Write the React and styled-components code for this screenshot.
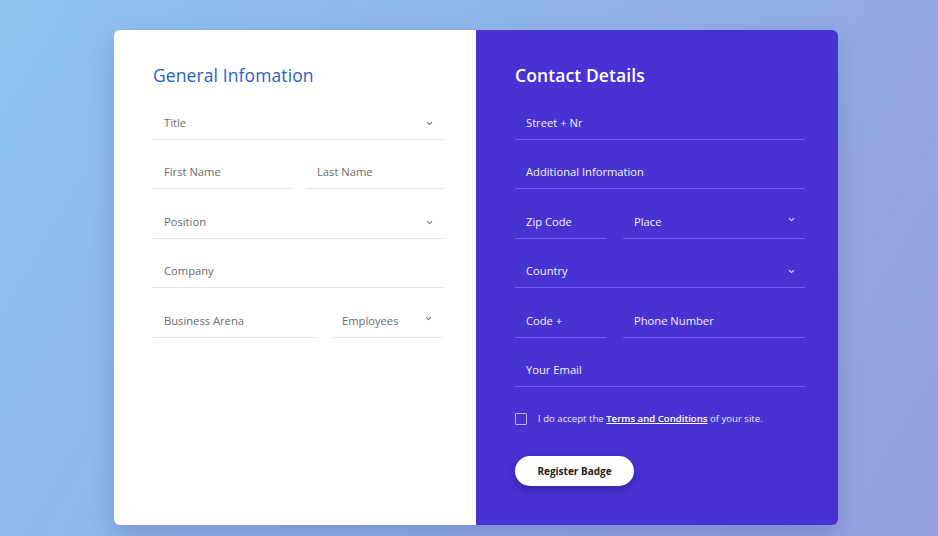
import React from "react";
import styled, { createGlobalStyle } from "styled-components";

const GlobalStyle = createGlobalStyle`
  html, body {
    margin: 0;
    padding: 0;
  }
  body {
    font-family: "Open Sans", "Liberation Sans", sans-serif;
    background: linear-gradient(120deg, #8cc4ec 0%, #90b4e8 45%, #959fe0 100%);
    min-height: 100vh;
  }
`;

const Page = styled.div`
  width: 938px;
  height: 536px;
  padding: 30px 0 0 14px;
  box-sizing: border-box;
  display: flex;
  justify-content: center;
  align-items: flex-start;
`;

const Card = styled.div`
  width: 724px;
  height: 495px;
  display: grid;
  grid-template-columns: 362px 362px;
  border-radius: 6px;
  overflow: hidden;
  box-shadow: 0 10px 24px rgba(60, 70, 160, 0.28);
`;

const Panel = styled.div`
  padding: 35px 33px 0 39px;
  background: ${(p) => (p.$dark ? "#4733d3" : "#ffffff")};
  display: flex;
  flex-direction: column;
`;

const Heading = styled.h2`
  margin: 0 0 5px;
  font-size: 17.5px;
  line-height: 20px;
  font-weight: ${(p) => (p.$dark ? 600 : 500)};
  color: ${(p) => (p.$dark ? "#ffffff" : "#1f63c6")};
  letter-spacing: 0.1px;
`;

const Row = styled.div`
  display: grid;
  grid-template-columns: ${(p) => p.$cols || "1fr"};
  column-gap: ${(p) => p.$gap || 15}px;
  width: 290px;
`;

const Field = styled.div`
  height: 49.5px;
  box-sizing: border-box;
  display: flex;
  align-items: flex-end;
`;

const FieldInner = styled.div`
  flex: 1;
  height: 34px;
  box-sizing: border-box;
  display: flex;
  align-items: center;
  justify-content: space-between;
  padding: 0 10px 0 11px;
  border-bottom: 1px solid ${(p) => (p.$dark ? "#6c5ef0" : "#e2e3e6")};
  font-size: 11.2px;
  color: ${(p) => (p.$dark ? "#f4f2ff" : "#6b6b6b")};
`;

const Chevron = styled.svg`
  width: 7px;
  height: 5px;
  margin-top: ${(p) => p.$up || 2}px;
`;

const Arrow = ({ dark, up }) => (
  <Chevron viewBox="0 0 7 5" $up={up}>
    <path
      d="M1 1.2 L3.5 3.6 L6 1.2"
      fill="none"
      stroke={dark ? "#e8e6ff" : "#777"}
      strokeWidth="1.1"
    />
  </Chevron>
);

const Input = ({ label, dark, select, up }) => (
  <Field>
    <FieldInner $dark={dark}>
      <span>{label}</span>
      {select && <Arrow dark={dark} up={up} />}
    </FieldInner>
  </Field>
);

const Terms = styled.label`
  display: flex;
  align-items: center;
  gap: 11px;
  margin-top: 25px;
  font-size: 9.6px;
  color: #e9e6ff;
`;

const Box = styled.span`
  width: 10px;
  height: 10px;
  border: 1px solid #b9b2f4;
  border-radius: 1px;
`;

const Link = styled.a`
  color: #ffffff;
  font-weight: 600;
  text-decoration: underline;
`;

const Button = styled.button`
  margin-top: 31px;
  align-self: flex-start;
  width: 119px;
  height: 30px;
  border: none;
  border-radius: 15px;
  background: #ffffff;
  color: #222;
  font-family: inherit;
  font-size: 10px;
  font-weight: 700;
  box-shadow: 0 4px 10px rgba(20, 10, 90, 0.35);
`;

export default function App() {
  return (
    <>
      <GlobalStyle />
      <Page>
        <Card>
          <Panel>
            <Heading>General Infomation</Heading>
            <Row>
              <Input label="Title" select />
            </Row>
            <Row $cols="138px 138px">
              <Input label="First Name" />
              <Input label="Last Name" />
            </Row>
            <Row>
              <Input label="Position" select />
            </Row>
            <Row>
              <Input label="Company" />
            </Row>
            <Row $cols="162px 111px" $gap={16}>
              <Input label="Business Arena" />
              <Input label="Employees" select up={-4} />
            </Row>
          </Panel>
          <Panel $dark>
            <Heading $dark>Contact Details</Heading>
            <Row>
              <Input dark label="Street + Nr" />
            </Row>
            <Row>
              <Input dark label="Additional Information" />
            </Row>
            <Row $cols="91px 182px" $gap={17}>
              <Input dark label="Zip Code" />
              <Input dark label="Place" select up={-4} />
            </Row>
            <Row>
              <Input dark label="Country" select />
            </Row>
            <Row $cols="91px 182px" $gap={17}>
              <Input dark label="Code +" />
              <Input dark label="Phone Number" />
            </Row>
            <Row>
              <Input dark label="Your Email" />
            </Row>
            <Terms>
              <Box />
              <span>
                I do accept the <Link>Terms and Conditions</Link> of your site.
              </span>
            </Terms>
            <Button>Register Badge</Button>
          </Panel>
        </Card>
      </Page>
    </>
  );
}
